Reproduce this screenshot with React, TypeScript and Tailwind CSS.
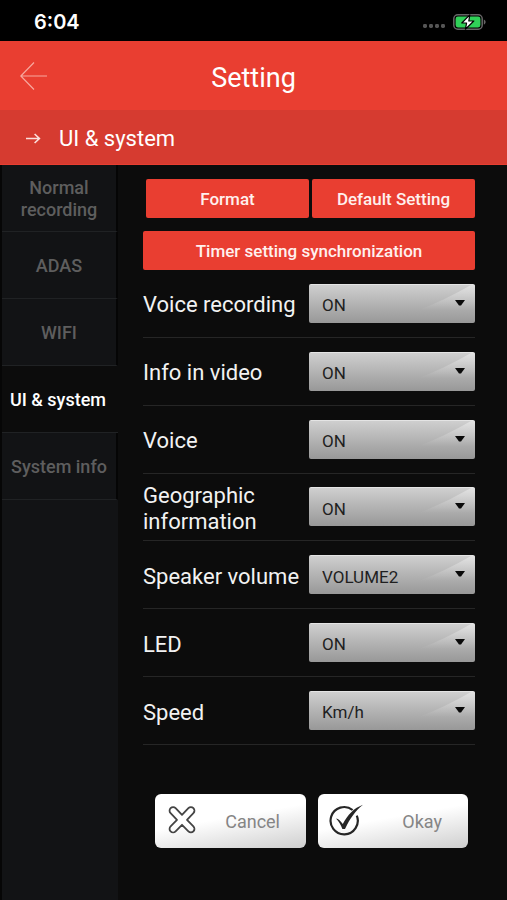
import { useState } from "react";

const tabs = ["Normal recording", "ADAS", "WIFI", "UI & system", "System info"];

const onOff = ["ON", "OFF"];

const settings = [
  { id: "voice-recording", label: "Voice recording", options: onOff },
  { id: "info-in-video", label: "Info in video", options: onOff },
  { id: "voice", label: "Voice", options: onOff },
  { id: "geographic", label: "Geographic information", options: onOff },
  { id: "speaker-volume", label: "Speaker volume", options: ["VOLUME2", "VOLUME1", "VOLUME3"] },
  { id: "led", label: "LED", options: onOff },
  { id: "speed", label: "Speed", options: ["Km/h", "MPH"] },
];

function StatusBar() {
  return (
    <div className="flex h-[41px] items-center justify-between bg-black pt-0.5 pr-[21px] pl-[34px]">
      <span className="font-['Inter',sans-serif] text-[20px] leading-6 font-semibold">6:04</span>
      <div className="flex items-center gap-[7px]">
        <svg width="24" height="14" viewBox="0 0 24 14" fill="#555" aria-hidden="true">
          <rect x="1" y="9" width="4" height="4" rx="1.4" />
          <rect x="7" y="9" width="4" height="4" rx="1.4" />
          <rect x="13" y="9" width="4" height="4" rx="1.4" />
          <rect x="19" y="9" width="4" height="4" rx="1.4" />
        </svg>
        <svg width="33" height="16" viewBox="0 0 33 16" aria-hidden="true">
          <rect x="0.8" y="0.8" width="28.4" height="14.4" rx="4" fill="none" stroke="#666" strokeWidth="1.5" />
          <rect x="2.6" y="2.6" width="24.8" height="10.8" rx="2.3" fill="#30d158" />
          <path d="M30.8 5.4c1.2.5 1.8 1.4 1.8 2.6s-.6 2.1-1.8 2.6z" fill="#666" />
          <path
            d="M16.8 0.8 8.8 9h4.8L12.4 15.2l8.4-8.2h-5z"
            fill="#fff"
            stroke="#000"
            strokeWidth="1.2"
            strokeLinejoin="round"
          />
        </svg>
      </div>
    </div>
  );
}

function Header() {
  return (
    <header>
      <div className="grid h-[69px] grid-cols-[60px_1fr_60px] items-center bg-[#e93e31] pt-1">
        <button type="button" aria-label="Back" className="flex h-11 items-center pl-5 pb-1">
          <svg width="28" height="28" viewBox="0 0 28 28" fill="none" stroke="#f7a89f" strokeWidth="1.2" aria-hidden="true">
            <path d="M14 .5.8 14 14 27.5M.8 14H27" />
          </svg>
        </button>
        <h1 className="text-center text-[27px] leading-8">Setting</h1>
      </div>
      <div className="flex h-[55px] items-center gap-[18px] border-b border-[#e93e31] bg-[#d63b30] pt-1 pl-[26px] text-[22px] leading-[26px]">
        <svg width="15" height="12" viewBox="0 0 15 12" fill="none" stroke="#fbe0dd" strokeWidth="1.6" aria-hidden="true">
          <path d="M0 5.5h13.4M8.6 1l4.8 4.5-4.8 4.5" />
        </svg>
        <h2>UI &amp; system</h2>
      </div>
    </header>
  );
}

function Setting({ id, label, options }: { id: string; label: string; options: string[] }) {
  return (
    <div className="grid grid-cols-2 items-center border-b border-[#262626]">
      <label htmlFor={id} className="pt-1 text-[22px] leading-[26px] text-[#f2f2f2]">
        {label}
      </label>
      <div className="relative h-[39px]">
        <select
          id={id}
          className="size-full appearance-none rounded-xs border-t border-[#e4e4e4] bg-linear-to-b from-[#cfcfcf] to-[#989898] pt-1 pl-[13px] text-[17px] text-[#1f1f1f]"
        >
          {options.map((option) => (
            <option key={option}>{option}</option>
          ))}
        </select>
        <svg
          className="pointer-events-none absolute top-0 right-0"
          width="64"
          height="39"
          viewBox="0 0 64 39"
          aria-hidden="true"
        >
          <defs>
            <linearGradient id={`${id}-shine`} gradientUnits="userSpaceOnUse" x1="0" y1="1" x2="0" y2="26">
              <stop offset="0" stopColor="#fff" stopOpacity="0.4" />
              <stop offset="1" stopColor="#fff" stopOpacity="0" />
            </linearGradient>
          </defs>
          <path d="M64 1v25H8Q34 16 60 1z" fill={`url(#${id}-shine)`} />
          <path d="M44 16h10l-4 5.5h-2z" fill="#0a0a0a" />
        </svg>
      </div>
    </div>
  );
}

const redButton = "h-[39px] rounded-xs bg-[#e93e31] text-[17px] leading-5 font-medium text-[#fff0ee]";

const paleButton =
  "flex h-[54px] flex-1 items-center rounded-md bg-linear-170 from-white from-45% to-[#cfcfcf] text-[18px] text-[#858585]";

export default function App() {
  const [active, setActive] = useState("UI & system");

  return (
    <div className="flex min-h-screen flex-col bg-[#0c0c0c] font-['Roboto',sans-serif] text-white">
      <StatusBar />
      <Header />
      <div className="flex flex-1">
        <nav className="flex w-[118px] shrink-0 flex-col border-l-2 border-[#060606] bg-[#121315]">
          {tabs.map((tab) => (
            <button
              key={tab}
              type="button"
              onClick={() => setActive(tab)}
              className={
                tab === active
                  ? "h-[67px] border-b border-b-[#202224] bg-[#0c0c0c] pt-0.5 pr-1 text-[18px] leading-[22px] font-medium text-white"
                  : "h-[67px] border-r-2 border-b border-r-[#050505] border-b-[#202224] px-2 pt-0.5 text-[18px] leading-[22px] font-medium text-[#5e5e5e]"
              }
            >
              {tab}
            </button>
          ))}
        </nav>
        <main className="flex flex-1 flex-col pt-[14px] pr-8 pb-8 pl-[25px]">
          <div className="grid grid-cols-2 gap-[3px] pl-[3px]">
            <button type="button" className={redButton}>
              Format
            </button>
            <button type="button" className={redButton}>
              Default Setting
            </button>
          </div>
          <button type="button" className={`${redButton} mt-[13px]`}>
            Timer setting synchronization
          </button>
          <form className="flex flex-col">
            <div className="grid h-[475px] auto-rows-fr">
              {settings.map((setting) => (
                <Setting key={setting.id} {...setting} />
              ))}
            </div>
            <div className="mt-[49px] flex gap-3 pr-[7px] pl-3">
              <button type="button" className={`${paleButton} justify-between pr-[26px] pl-3`}>
                <svg
                  width="30"
                  height="32"
                  viewBox="0 0 30 32"
                  fill="none"
                  stroke="#444"
                  strokeWidth="1.8"
                  strokeLinejoin="round"
                  aria-hidden="true"
                >
                  <path d="M15 9.8 21.4 3.2a3.5 3.5 0 0 1 5 5L20 14.8l6.4 6.6a3.5 3.5 0 0 1-5 5L15 19.8l-6.4 6.6a3.5 3.5 0 0 1-5-5L10 14.8 3.6 8.2a3.5 3.5 0 0 1 5-5z" />
                </svg>
                <span>Cancel</span>
              </button>
              <button type="button" className={`${paleButton} justify-between pr-[26px] pl-[11px]`}>
                <svg width="36" height="34" viewBox="0 0 36 34" fill="none" aria-hidden="true">
                  <path d="M23.6 6A13.6 13.6 0 1 0 27.8 11.6" stroke="#262626" strokeWidth="2.2" />
                  <path
                    d="M7 14.5c2.6.2 4.6 2.4 6.8 5.6C18.5 11 25 4 34 .8 26.5 6.8 21 14.5 16 25h-2.6C11.8 20.8 9.8 17.5 7 14.5z"
                    fill="#262626"
                  />
                </svg>
                <span>Okay</span>
              </button>
            </div>
          </form>
        </main>
      </div>
    </div>
  );
}
